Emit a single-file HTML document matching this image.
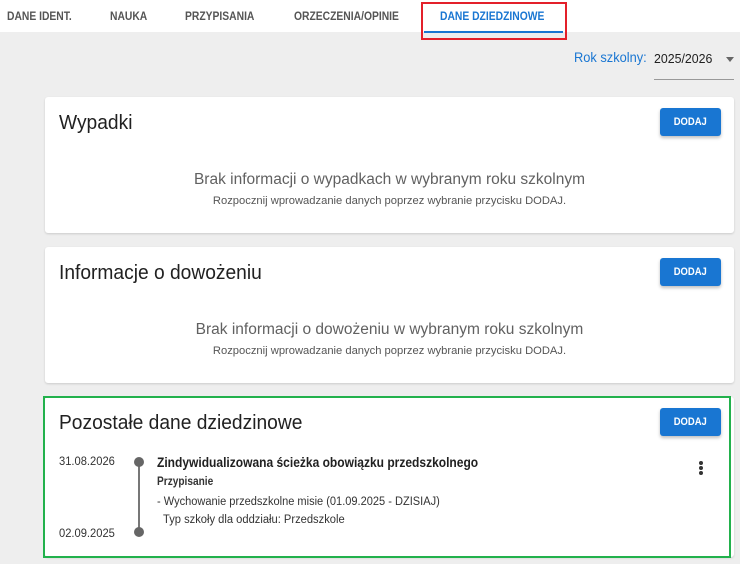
<!DOCTYPE html>
<html><head><meta charset="utf-8"><style>
*{margin:0;padding:0;box-sizing:border-box}
body{width:740px;height:564px;background:#eeeeee;font-family:"Liberation Sans",sans-serif;position:relative;overflow:hidden;color:#212121}
.a{position:absolute;white-space:nowrap}
.c{display:inline-block;transform:scaleX(.86);transform-origin:left center}
.cc{display:inline-block;transform:scaleX(.86);transform-origin:center center}
.top{position:absolute;left:0;top:0;width:740px;height:32px;background:#fff}
.tab{position:absolute;top:9px;font-size:12px;color:#555;font-weight:bold}
.card{position:absolute;left:45px;width:689px;background:#fff;border-radius:3px;box-shadow:0 1px 2px rgba(0,0,0,.15)}
.btn{position:absolute;left:615px;top:11px;width:61px;height:28px;background:#1976d2;border-radius:3px;color:#fff;font-size:11px;font-weight:bold;text-align:center;line-height:28px;box-shadow:0 2px 3px rgba(0,0,0,.25)}
.title{position:absolute;left:14px;top:15px;font-size:20px;color:#212121}
.title .c{transform:scaleX(.96)}
.m1{position:absolute;left:0;width:689px;text-align:center;font-size:15.5px;color:#616161}
.m2{position:absolute;left:0;width:689px;text-align:center;font-size:11.2px;color:#555}
</style></head><body>
<div class="top"></div>
<div class="tab" style="left:7px"><span class="c">DANE IDENT.</span></div>
<div class="tab" style="left:110px"><span class="c">NAUKA</span></div>
<div class="tab" style="left:185px"><span class="c">PRZYPISANIA</span></div>
<div class="tab" style="left:294px"><span class="c">ORZECZENIA/OPINIE</span></div>
<div class="tab" style="left:440px;color:#1976d2"><span class="c">DANE DZIEDZINOWE</span></div>
<div class="a" style="left:424px;top:31px;width:139px;height:2px;background:#1976d2"></div>
<div class="a" style="left:421px;top:2px;width:146px;height:38px;border:2px solid #e3202a"></div>
<div class="a" style="left:574px;top:50px;font-size:13.5px;color:#1976d2"><span class="c" style="transform:scaleX(.95)">Rok szkolny:</span></div>
<div class="a" style="left:654px;top:51px;font-size:13px;color:#212121"><span class="c" style="transform:scaleX(.95)">2025/2026</span></div>
<div class="a" style="left:726px;top:57px;width:0;height:0;border-left:4px solid transparent;border-right:4px solid transparent;border-top:5px solid #666"></div>
<div class="a" style="left:654px;top:79px;width:80px;height:1px;background:#999"></div>

<div class="card" style="top:97px;height:136px">
<div class="title"><span class="c">Wypadki</span></div><div class="btn"><span class="cc">DODAJ</span></div>
<div class="m1" style="top:74px">Brak informacji o wypadkach w wybranym roku szkolnym</div>
<div class="m2" style="top:98px">Rozpocznij wprowadzanie danych poprzez wybranie przycisku DODAJ.</div>
</div>
<div class="card" style="top:247px;height:136px">
<div class="title"><span class="c">Informacje o dowożeniu</span></div><div class="btn"><span class="cc">DODAJ</span></div>
<div class="m1" style="top:74px">Brak informacji o dowożeniu w wybranym roku szkolnym</div>
<div class="m2" style="top:98px">Rozpocznij wprowadzanie danych poprzez wybranie przycisku DODAJ.</div>
</div>
<div class="card" style="top:397px;height:160px">
<div class="title"><span class="c">Pozostałe dane dziedzinowe</span></div><div class="btn"><span class="cc">DODAJ</span></div>
</div>
<div class="a" style="left:43px;top:396px;width:688px;height:162px;border:2px solid #22b14c"></div>
<div class="a" style="left:59px;top:454px;font-size:12px;color:#333"><span class="c" style="transform:scaleX(.93)">31.08.2026</span></div>
<div class="a" style="left:59px;top:526px;font-size:12px;color:#333"><span class="c" style="transform:scaleX(.93)">02.09.2025</span></div>
<div class="a" style="left:138px;top:462px;width:2px;height:70px;background:#777"></div>
<div class="a" style="left:134px;top:457px;width:10px;height:10px;border-radius:50%;background:#666"></div>
<div class="a" style="left:134px;top:527px;width:10px;height:10px;border-radius:50%;background:#666"></div>
<div class="a" style="left:157px;top:455px;font-size:13.5px;font-weight:bold;color:#212121"><span class="c" style="transform:scaleX(.89)">Zindywidualizowana ścieżka obowiązku przedszkolnego</span></div>
<div class="a" style="left:157px;top:476px;font-size:11.5px;font-weight:bold;color:#333"><span class="c" style="transform:scaleX(.88)">Przypisanie</span></div>
<div class="a" style="left:157px;top:496px;font-size:11.5px;color:#333"><span class="c" style="transform:scaleX(.96)">- Wychowanie przedszkolne misie (01.09.2025 - DZISIAJ)</span></div>
<div class="a" style="left:163px;top:514px;font-size:11.5px;color:#333"><span class="c" style="transform:scaleX(.97)">Typ szkoły dla oddziału: Przedszkole</span></div>
<div class="a" style="left:699px;top:461px;width:4px;height:4px;border-radius:50%;background:#333;box-shadow:0 5px 0 #333,0 10px 0 #333"></div>
</body></html>
